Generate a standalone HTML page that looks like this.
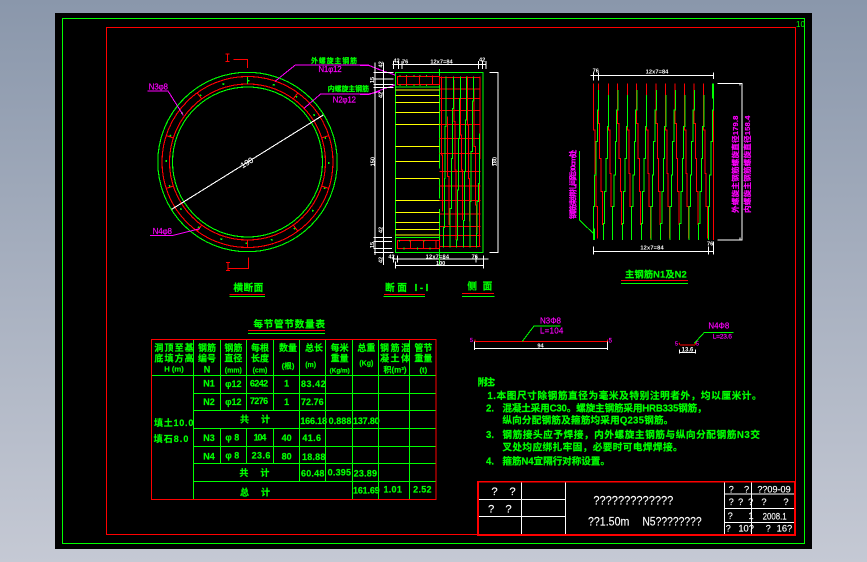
<!DOCTYPE html>
<html><head><meta charset="utf-8"><style>
html,body{margin:0;padding:0;width:867px;height:562px;overflow:hidden;background:linear-gradient(#8a97ab,#c5c9d4)}
svg{position:absolute;left:0;top:0}
text{font-family:"Liberation Sans","Noto Sans CJK SC",sans-serif}
.l{fill:none;shape-rendering:crispEdges;stroke-width:3}
.g{stroke:#00ff00}.r{stroke:#ff0000}.w{stroke:#fff}.y{stroke:#ffff00}.m{stroke:#ff00ff}
.tg{fill:#00ff00;font-weight:bold;stroke:#00ff00;stroke-width:.6}
.tm{fill:#ff00ff;stroke:#ff00ff;stroke-width:.5}
.tw{fill:#fff;stroke:#fff;stroke-width:.4}
</style></head><body>
<svg width="867" height="562" viewBox="0 0 867 562" xmlns="http://www.w3.org/2000/svg">
<rect x="55" y="13" width="757" height="536" fill="#000"/>
<rect x="62.5" y="18.5" width="742" height="525" fill="none" stroke="#00ff00" shape-rendering="crispEdges"/>
<rect x="106.5" y="27.5" width="689" height="507" fill="none" stroke="#ff0000" shape-rendering="crispEdges"/>
<text x="796" y="27" font-size="8" fill="#00ff00">10</text>

<!-- circle section -->
<g fill="none" shape-rendering="crispEdges" stroke-width="1.1">
<circle cx="247.5" cy="162" r="89.7" stroke="#00ff00"/>
<circle cx="247.5" cy="162" r="75" stroke="#00ff00"/>
<circle cx="247.5" cy="162" r="85.5" stroke="#ff0000"/>
<circle cx="247.5" cy="162" r="78" stroke="#ff0000"/>
<circle cx="247.5" cy="162" r="81.5" stroke="#00ff00" stroke-width="1.5" stroke-dasharray="2 23.6"/>
<g stroke="#ff0000">
<line x1="247.5" y1="77" x2="247.5" y2="84" stroke="#00ff00"/>
<line x1="247.5" y1="76" x2="247.5" y2="84" transform="rotate(36 247.5 162)"/>
<line x1="247.5" y1="76" x2="247.5" y2="84" transform="rotate(72 247.5 162)"/>
<line x1="247.5" y1="76" x2="247.5" y2="84" transform="rotate(108 247.5 162)"/>
<line x1="247.5" y1="76" x2="247.5" y2="84" transform="rotate(144 247.5 162)"/>
<line x1="247.5" y1="76" x2="247.5" y2="84" transform="rotate(216 247.5 162)"/>
<line x1="247.5" y1="76" x2="247.5" y2="84" transform="rotate(252 247.5 162)"/>
<line x1="247.5" y1="76" x2="247.5" y2="84" transform="rotate(288 247.5 162)"/>
<line x1="247.5" y1="76" x2="247.5" y2="84" transform="rotate(324 247.5 162)"/>
<line x1="247.5" y1="240" x2="247.5" y2="248"/>
</g>
<path d="M171.7 209.3L323.3 115" stroke="#fff"/>
</g>
<g transform="translate(140,40) scale(.33333)">
<path class="l r" d="M280 58H322V84M325 652V685H262"/>
<path class="l r" d="M262 42V64M256 42H268M256 64H268M264 668V692M258 668H270M258 692H270"/>
<path class="l m" d="M405 124L466 75H685L720 90"/>
<path class="l m" d="M492 205L542 162H685L720 155"/>
<path class="l m" d="M22 153H84L130 226"/>
<path class="l m" d="M30 586H100L180 566"/>
<text x="513" y="69" font-size="21" class="tg" textLength="138">外螺旋主钢筋</text>
<text x="535" y="96" font-size="24" class="tm" textLength="70">N1φ12</text>
<text x="563" y="153" font-size="21" class="tg" textLength="124">内螺旋主钢筋</text>
<text x="578" y="188" font-size="24" class="tm" textLength="70">N2φ12</text>
<text x="26" y="149" font-size="24" class="tm" textLength="58">N3φ8</text>
<text x="38" y="582" font-size="24" class="tm" textLength="58">N4φ8</text>
<text x="0" y="0" font-size="24" class="tw" transform="translate(325,375) rotate(-32)" text-anchor="middle">190</text>
<text x="280" y="753" font-size="29" class="tg" textLength="90">横断面</text>
<path class="l r" d="M268 764H375"/><path class="l g" d="M268 770H375"/>
</g>

<!-- side section -->
<g transform="translate(360,55) scale(.33333)">
<path class="l m" d="M0 32H28L70 48L105 60M0 118H28L70 102L105 90"/>
<path class="l w" d="M45 22V600M70 22V630M40 52H100M40 72H100M40 88H100M40 97H100M40 547H96M40 560H96M40 580H96M42 592H100"/>
<path class="l w" d="M97 28H378M100 18V42M115 18V42M126 18V42M356 18V42M368 18V42M378 18V42"/>
<path class="l w" d="M97 612H386M100 602V622M112 602V622M348 602V622M370 602V622"/>
<path class="l w" d="M106 632H370M106 620V640M370 612V640"/>
<path class="l w" d="M388 52H414V592H388M398 312V332"/>
<rect x="106" y="53" width="263" height="539" class="l g" />
<path class="l g" d="M106 96H238M106 547H238M238 42V340M238 372V430M238 462V630"/>
<path class="l y" d="M106 105H238M106 121H238M106 142H238M106 172H238M106 208H238M106 274H238M106 319H238M106 370H238M106 436H238M106 472H238M106 502H238M106 523H238M106 540H238"/>
<rect x="112" y="65" width="126" height="23" class="l r"/>
<rect x="112" y="557" width="126" height="23" class="l r"/>
<path class="l r" d="M140 62V90M178 62V90M217 62V90M152 555V582M190 555V582M228 555V582"/>
<path class="l g" d="M120 60V64M140 60V64M162 60V64M180 60V64M200 60V64M120 88V93M140 88V93M162 88V93M180 88V93M200 88V93M118 555V560M150 555V560M172 578V584M192 555V560M210 578V584M132 578V584"/>
<path class="l r" d="M238 67H361M238 102H361M238 130H361M238 166H361M238 208H361M238 250H361M238 295H361M238 349H361M238 393H361M238 436H361M238 477H361M238 514H361M238 541H361M238 575H361"/>
<path class="l r" d="M245 65V300H248V470M263 185V365H267V510M282 75V200H285V345H288V555M302 100V240H305V345H308V495M322 65V210H325V370H328V500M342 100V275H346V450H349V575M360 65V310H358V575"/>
<path class="l g" d="M258 65V215H255V370H253V517H250V578M280 65V160H277V310H274V460H270V578M301 65V130H298V250H295V405H292V555H290V578M320 65V195H317V350H313V497H310V578M340 65V138H337V290H333V440H330V578M358 235V385H355V440H351V535H349V578"/>
<g fill="#fff" font-size="17" font-weight="bold">
<text x="100" y="22">42</text><text x="126" y="26">76</text><text x="211" y="25" textLength="67">12x7=84</text><text x="357" y="20">42</text>
<text x="197" y="610" textLength="70">12x7=84</text><text x="85" y="610">42</text><text x="335" y="610">76</text><text x="228" y="630" textLength="28">100</text>
<text transform="translate(44,320) rotate(-90)" text-anchor="middle">150</text>
<text transform="translate(409,320) rotate(-90)" text-anchor="middle">180</text>
<text transform="translate(68,28) rotate(-90)" text-anchor="middle">42</text>
<text transform="translate(42,75) rotate(-90)" text-anchor="middle">15</text>
<text transform="translate(68,120) rotate(-90)" text-anchor="middle">42</text>
<text transform="translate(68,525) rotate(-90)" text-anchor="middle">42</text>
<text transform="translate(42,570) rotate(-90)" text-anchor="middle">15</text>
<text transform="translate(68,615) rotate(-90)" text-anchor="middle">42</text>
</g>
<text x="75" y="708" font-size="29" class="tg" textLength="130">断面 I-I</text>
<text x="322" y="703" font-size="29" class="tg" textLength="75">侧 面</text>
<path class="l r" d="M72 718H195M306 715H402"/><path class="l g" d="M70 724H195M306 724H404"/>
</g>

<!-- spiral -->
<g transform="translate(560,55) scale(.33333)">
<defs>
<path id="ra" d="M0 85V205H4V310H8V410H12V510"/>
<path id="rb" d="M0 85V225H5V355H8V455H12V550"/>
<path id="ga" d="M0 555V455H4V360H8V260H12V165H16V105"/>
<path id="gb" d="M0 555V505H4V410H8V310H12V215H16V120"/>
</defs>
<g class="l r">
<use href="#rb" x="100"/><use href="#ra" x="115"/><use href="#rb" x="145"/><use href="#ra" x="173"/><use href="#rb" x="202"/><use href="#ra" x="230"/><use href="#rb" x="259"/><use href="#ra" x="288"/><use href="#rb" x="316"/><use href="#ra" x="345"/><use href="#rb" x="373"/><use href="#ra" x="402"/><use href="#rb" x="430"/>
<path d="M460 135V555"/>
</g>
<g class="l g">
<use href="#ga" x="100"/><use href="#gb" x="130"/><use href="#ga" x="158"/><use href="#gb" x="187"/><use href="#ga" x="215"/><use href="#gb" x="244"/><use href="#ga" x="273"/><use href="#gb" x="302"/><use href="#ga" x="330"/><use href="#gb" x="359"/><use href="#ga" x="387"/><use href="#gb" x="416"/><use href="#ga" x="445"/>
<path d="M458 85V130M461 85V130M100 520V555M103 520V555"/>
</g>
<path d="M58 288V495L100 535" class="l g"/>
<path class="l w" d="M92 61H461M100 52V76M115 52V76M461 52V72"/>
<path class="l w" d="M100 590H461M100 574V598M445 574V598M461 560V598"/>
<path class="l w" d="M472 85H546V555H472M540 85V92M540 548V555"/>
<text x="98" y="52" font-size="17" fill="#fff" font-weight="bold">76</text>
<text x="257" y="56" font-size="17" fill="#fff" font-weight="bold" textLength="68">12x7=84</text>
<text x="241" y="584" font-size="17" fill="#fff" font-weight="bold" textLength="70">12x7=84</text>
<text x="441" y="572" font-size="17" fill="#fff" font-weight="bold">76</text>
<g class="tm" font-weight="bold" font-size="23">
<text transform="translate(46,492) rotate(-90)" textLength="208">钢筋束绑扎间距30cm处</text>
<text transform="translate(534,474) rotate(-90)" textLength="292">外螺旋主钢筋螺旋直径179.8</text>
<text transform="translate(570,474) rotate(-90)" textLength="292">内螺旋主钢筋螺旋直径158.4</text>
</g>
<text x="195" y="668" font-size="28" class="tg" textLength="185">主钢筋N1及N2</text>
<path class="l r" d="M183 676H384"/><path class="l g" d="M183 685H384"/>
</g>

<!-- table -->
<g transform="translate(145,315) scale(.33333)">
<text x="325" y="38" font-size="29" class="tg" textLength="215">每节管节数量表</text>
<path class="l r" d="M309 46H540"/><path class="l g" d="M309 55H540"/>
<path class="l g" d="M20 181H873M145 235H873M145 286H873M145 340H873M145 394H873M145 445H873M145 499H873"/>
<path class="l g" d="M145 73V553M226 73V286M226 340V445M304 73V286M304 340V445M385 73V286M385 340V445M463 73V499M541 73V499M622 73V553M700 73V553M793 73V553"/>
<rect x="20" y="73" width="853" height="480" class="l r"/>
<g class="tg" font-size="27" text-anchor="middle">
<text x="87" y="108" textLength="118">洞顶至基</text><text x="87" y="140" textLength="118">底填方高</text><text x="87" y="170" font-size="23">H (m)</text>
<text x="186" y="108">钢筋</text><text x="186" y="140">编号</text><text x="186" y="172">N</text>
<text x="265" y="108">钢筋</text><text x="265" y="140">直径</text><text x="265" y="172" font-size="21">(mm)</text>
<text x="345" y="108">每根</text><text x="345" y="140">长度</text><text x="345" y="172" font-size="21">(cm)</text>
<text x="429" y="108">数量</text><text x="429" y="160" font-size="23">(根)</text>
<text x="507" y="108">总长</text><text x="497" y="156" font-size="21">(m)</text>
<text x="584" y="108">每米</text><text x="584" y="140">重量</text><text x="584" y="172" font-size="19">(Kg/m)</text>
<text x="664" y="108">总重</text><text x="664" y="152" font-size="21">(Kg)</text>
<text x="750" y="108" textLength="90">钢筋混</text><text x="750" y="140" textLength="90">凝土体</text><text x="750" y="172" font-size="24">积(m³)</text>
<text x="835" y="108">管节</text><text x="835" y="140">重量</text><text x="835" y="172" font-size="23">(t)</text>
<text x="192" y="214">N1</text><text x="265" y="216">φ12</text><text x="342" y="214" textLength="55">6242</text><text x="425" y="214">1</text><text x="505" y="216" textLength="74">83.42</text>
<text x="192" y="270">N2</text><text x="265" y="270">φ12</text><text x="342" y="267" textLength="55">7276</text><text x="425" y="270">1</text><text x="502" y="270" textLength="68">72.76</text>
<text x="330" y="323" textLength="90">共 计</text><text x="506" y="327" textLength="80">166.18</text><text x="585" y="327" textLength="68">0.888</text><text x="664" y="327" textLength="80">137.80</text>
<text x="192" y="378">N3</text><text x="262" y="376">φ 8</text><text x="345" y="377" textLength="38">104</text><text x="425" y="378">40</text><text x="500" y="378" textLength="56">41.6</text>
<text x="192" y="433">N4</text><text x="262" y="431">φ 8</text><text x="348" y="431" textLength="56">23.6</text><text x="425" y="434">80</text><text x="506" y="435" textLength="70">18.88</text>
<text x="328" y="483" textLength="90">共 计</text><text x="503" y="485" textLength="70">60.48</text><text x="583" y="482" textLength="70">0.395</text><text x="661" y="484" textLength="70">23.89</text>
<text x="330" y="541" textLength="90">总 计</text><text x="664" y="535" textLength="80">161.69</text><text x="743" y="532" textLength="55">1.01</text><text x="832" y="532" textLength="55">2.52</text>
<text x="86" y="333" textLength="118">填土10.0</text><text x="78" y="381" textLength="104">填石8.0</text>
</g>
</g>

<!-- bars -->
<g transform="translate(460,310) scale(.33333)">
<path class="l r" d="M45 94H442M45 94V88M442 94V88M660 105H705M660 105L657 98M705 105L708 98"/>
<path class="l w" d="M44 115H442M44 94V120M442 94V120M659 127H707M659 118V131M707 118V131"/>
<path class="l g" d="M187 94L222 48H302M703 100L733 67H820"/>
<g class="tm" font-size="24"><text x="240" y="41" textLength="63">N3Φ8</text><text x="240" y="71" textLength="70">L=104</text><text x="745" y="56" textLength="63">N4Φ8</text><text x="758" y="86" font-size="20" textLength="58">L=23.6</text>
<text x="30" y="96" font-size="16">5</text><text x="446" y="98" font-size="18">5</text><text x="645" y="107" font-size="16">5</text><text x="708" y="107" font-size="16">5</text></g>
<text x="232" y="112" font-size="17" fill="#fff" font-weight="bold">94</text>
<text x="665" y="125" font-size="18" fill="#fff" font-weight="bold">13.6</text>
<g class="tg" font-size="29">
<text x="53" y="227" textLength="70">附注：</text>
<text x="82" y="267" textLength="823">1.本图尺寸除钢筋直径为毫米及特别注明者外，均以厘米计。</text>
<text x="78" y="304">2.</text>
<text x="127" y="304" textLength="613">混凝土采用C30。螺旋主钢筋采用HRB335钢筋，</text>
<text x="127" y="341" textLength="513">纵向分配钢筋及箍筋均采用Q235钢筋。</text>
<text x="78" y="384">3.</text>
<text x="127" y="384" textLength="773">钢筋接头应予焊接，内外螺旋主钢筋与纵向分配钢筋N3交</text>
<text x="127" y="422" textLength="541">叉处均应绑扎牢固，必要时可电焊焊接。</text>
<text x="78" y="464">4.</text>
<text x="127" y="464" textLength="323">箍筋N4宜隔行对称设置。</text>
</g>
</g>

<!-- title block -->
<g transform="translate(470,475) scale(.33333)">
<path class="l w" d="M154 20V180M286 20V180M763 20V180M845 20V180M24 73H286M24 124H286M763 57H975M763 100H975M763 142H975"/>
<rect x="24" y="20" width="951" height="160" fill="none" stroke="#ff0000" stroke-width="5" shape-rendering="crispEdges"/>
<g class="tw" font-size="34">
<text x="64" y="60">?</text><text x="118" y="60">?</text><text x="54" y="112">?</text><text x="106" y="112">?</text>
<text x="370" y="88" font-size="36" textLength="240" lengthAdjust="spacingAndGlyphs">?????????????</text>
<text x="354" y="152" font-size="36" textLength="124" lengthAdjust="spacingAndGlyphs">??1.50m</text>
<text x="517" y="152" font-size="36" textLength="178" lengthAdjust="spacingAndGlyphs">N5????????</text>
</g>
<g class="tw" font-size="28">
<text x="776" y="52">?</text><text x="822" y="52">?</text><text x="862" y="52" textLength="100" lengthAdjust="spacingAndGlyphs">??09-09</text>
<text x="776" y="90">?</text><text x="804" y="90">?</text><text x="834" y="90">?</text><text x="874" y="90">?</text><text x="940" y="90">?</text>
<text x="773" y="132">?</text><text x="835" y="132">1</text><text x="878" y="134" textLength="72" lengthAdjust="spacingAndGlyphs">2008.1</text>
<text x="767" y="170">?</text><text x="805" y="170">10?</text><text x="887" y="170">?</text><text x="920" y="170">16?</text>
</g>
</g>
</svg>
</body></html>
